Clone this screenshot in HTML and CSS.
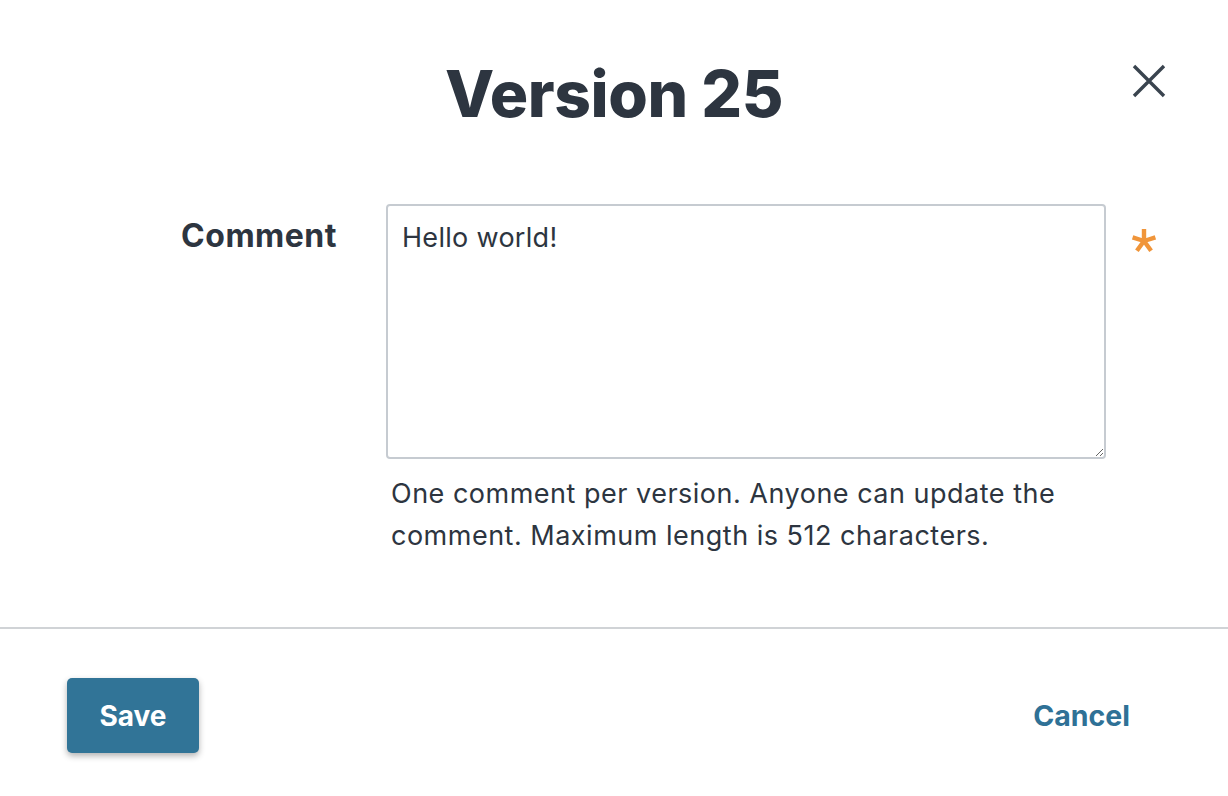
FILE: index.html
```html
<!DOCTYPE html>
<html lang="en">
<head>
    <meta charset="UTF-8">
    <meta name="viewport" content="width=device-width, initial-scale=1.0">
    <title>Version 25</title>
    <link rel="stylesheet" href="styles.css">
</head>
<body>
    <div class="dialog">
        <header class="dialog-header">
            <span></span>
            <h1>Version 25</h1>
            <button class="close" type="button" aria-label="Close">
                <svg width="34" height="34" viewBox="0 0 34 34">
                    <path d="M2 2 L32 32 M32 2 L2 32" stroke="#3a444f" stroke-width="3.4" fill="none"/>
                </svg>
            </button>
        </header>

        <form class="dialog-body" id="commentForm">
            <label for="comment">Comment</label>
            <div class="field">
                <textarea id="comment" name="comment" maxlength="512">Hello world!</textarea>
                <p class="hint">One comment per version. Anyone can update the comment. Maximum length is 512 characters.</p>
            </div>
            <span class="required" title="Required">
                <svg width="26" height="26" viewBox="0 0 26 26">
                    <!-- five arms, 72deg apart -->
                    <path d="M13 13 L13 1 M13 13 L24.4 9.3 M13 13 L20.1 22.7 M13 13 L5.9 22.7 M13 13 L1.6 9.3"
                          stroke="#f0953a" stroke-width="4.4" stroke-linecap="butt" fill="none"/>
                </svg>
            </span>
        </form>

        <footer class="dialog-footer">
            <button type="submit" form="commentForm" class="btn-save">Save</button>
            <button type="button" class="btn-cancel">Cancel</button>
        </footer>
    </div>
</body>
</html>
```

FILE: styles.css
```css
* {
    margin: 0;
    padding: 0;
    box-sizing: border-box;
}

body {
    font-family: Inter, "Noto Sans", Arial, sans-serif;
    background-color: #fff;
    color: #2d3540;
}

.dialog {
    width: 1228px;
    height: 796px;
}

.dialog-header {
    display: grid;
    grid-template-columns: 1fr auto 1fr;
    align-items: start;
    padding-top: 52px;
    height: 204px;
}

h1 {
    font-size: 64px;
    font-weight: 800;
    letter-spacing: -0.4px;
    line-height: 84px;
}

.close {
    justify-self: end;
    margin: 12px 62px 0 0;
    background: none;
    border: none;
    cursor: pointer;
    line-height: 0;
}

.dialog-body {
    display: grid;
    grid-template-columns: 337px 720px auto;
    column-gap: 49px;
    height: 423px;
}

.dialog-body label {
    text-align: right;
    font-size: 32px;
    font-weight: 700;
    line-height: 40px;
    margin-top: 12px;
    letter-spacing: 0.5px;
}

textarea {
    display: block;
    width: 720px;
    height: 255px;
    padding: 14px 14px;
    border: 2px solid #c6cbd1;
    border-radius: 4px;
    font-family: inherit;
    font-size: 27px;
    line-height: 36px;
    letter-spacing: 0.3px;
    color: #2d3540;
    resize: vertical;
}

.hint {
    font-size: 27px;
    letter-spacing: 0.5px;
    line-height: 42px;
    padding: 14px 20px 0 5px;
}

.required {
    margin: 24px 0 0 -24px;
    line-height: 0;
}

.dialog-footer {
    border-top: 2px solid #d0d3d6;
    display: flex;
    justify-content: space-between;
    align-items: center;
    padding: 49px 98px 0 67px;
}

.btn-save {
    width: 132px;
    height: 75px;
    background-color: #317497;
    color: #fff;
    border: none;
    border-radius: 5px;
    font-family: inherit;
    font-size: 28px;
    font-weight: 700;
    box-shadow: 0 3px 6px rgba(0, 0, 0, 0.3);
    cursor: pointer;
}

.btn-cancel {
    background: none;
    border: none;
    color: #2f7196;
    font-family: inherit;
    font-size: 28.5px;
    font-weight: 700;
    cursor: pointer;
}
```
